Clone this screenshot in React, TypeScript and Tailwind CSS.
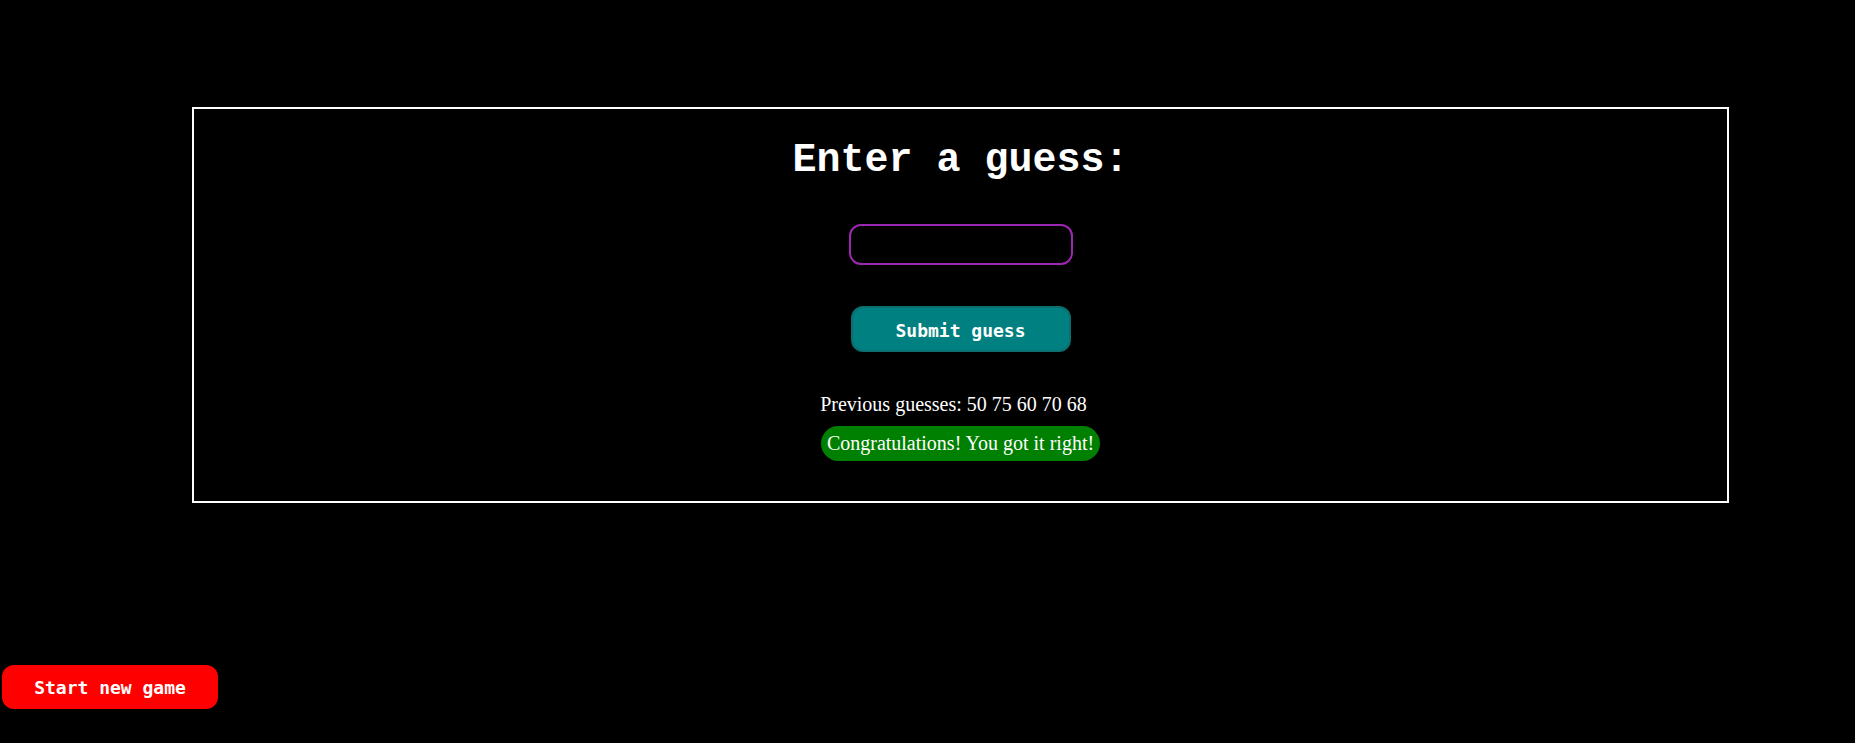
export default function App() {
  const guesses = [50, 75, 60, 70, 68];
  return (
    <div className="min-h-[743px] bg-black text-white overflow-hidden">
      <div className="ml-[192px] mt-[107px] w-[1537px] border-2 border-white flex flex-col items-center pt-[28px] pb-[40px]">
        <h1 className="font-['Liberation_Mono',monospace] font-bold text-[40px] leading-[48px]">Enter a guess:</h1>
        <input
          type="text"
          className="mt-[39px] w-[224px] h-[41px] rounded-[12px] border-2 border-[#9c27b0] bg-black text-white px-3 outline-none"
        />
        <button className="mt-[41px] w-[220px] h-[46px] rounded-[12px] bg-[#008080] border-2 border-[#0b6f6f] text-white font-['DejaVu_Sans_Mono',monospace] font-bold text-[18px] pt-[2px]">
          Submit guess
        </button>
        <p className="mt-[40px] pr-[14px] font-['Liberation_Serif',serif] text-[20px] leading-[24px]">
          Previous guesses: {guesses.join(" ")}
        </p>
        <p className="mt-[10px] bg-[#008000] rounded-full px-[6px] py-[6px] font-['Liberation_Serif',serif] text-[20px] leading-[23px]">
          Congratulations! You got it right!
        </p>
      </div>
      <button className="ml-[2px] mt-[162px] w-[216px] h-[44px] rounded-[12px] bg-[#ff0000] text-white font-['DejaVu_Sans_Mono',monospace] font-bold text-[18px]">
        Start new game
      </button>
    </div>
  );
}
